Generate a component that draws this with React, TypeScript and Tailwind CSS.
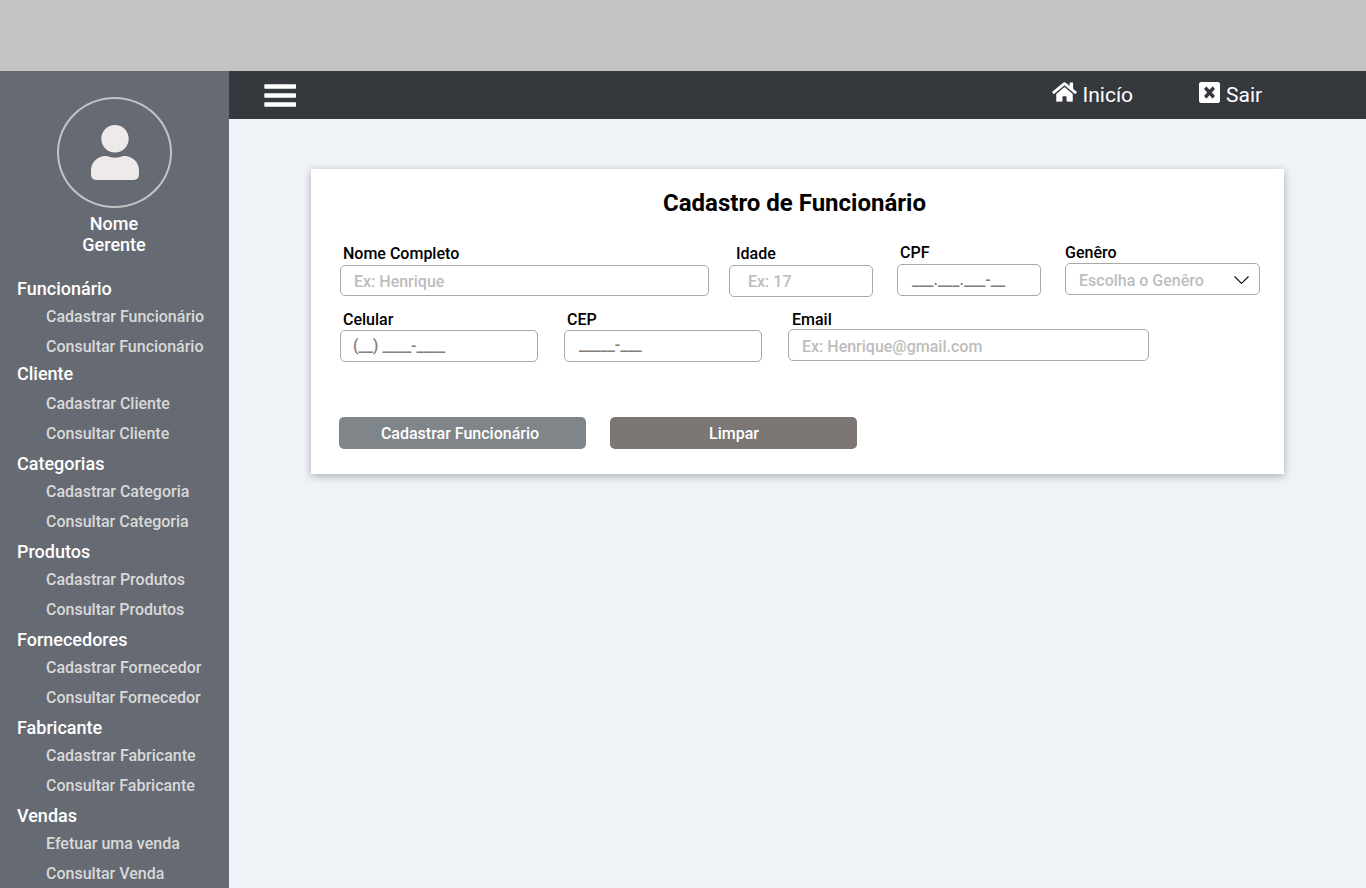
import React from 'react';
import { FaUser, FaHome } from 'react-icons/fa';

type Group = { title: string; items: string[]; className: string };

const groups: Group[] = [
  { title: 'Funcionário', items: ['Cadastrar Funcionário', 'Consultar Funcionário'], className: '' },
  { title: 'Cliente', items: ['Cadastrar Cliente', 'Consultar Cliente'], className: '-mt-px' },
  { title: 'Categorias', items: ['Cadastrar Categoria', 'Consultar Categoria'], className: 'mt-0.5' },
  { title: 'Produtos', items: ['Cadastrar Produtos', 'Consultar Produtos'], className: 'mt-0.5' },
  { title: 'Fornecedores', items: ['Cadastrar Fornecedor', 'Consultar Fornecedor'], className: 'mt-0.5' },
  { title: 'Fabricante', items: ['Cadastrar Fabricante', 'Consultar Fabricante'], className: 'mt-0.5' },
  { title: 'Vendas', items: ['Efetuar uma venda', 'Consultar Venda'], className: 'mt-0.5' },
];

type FieldProps = {
  label: string;
  hint: string;
  className: string;
  labelClass?: string;
  boxClass?: string;
  hintClass?: string;
  children?: React.ReactNode;
};

function Field({
  label,
  hint,
  className,
  labelClass = 'h-[21px] pl-[3px]',
  boxClass = 'h-8 pl-[13px] text-[#bdbdbd]',
  hintClass = '',
  children,
}: FieldProps) {
  return (
    <div className={`shrink-0 ${className}`}>
      <div className={`leading-[19px] text-black ${labelClass}`}>{label}</div>
      <div className={`flex items-center whitespace-pre rounded-[5px] border border-[#a9a7a7] bg-white ${boxClass}`}>
        <span className={hintClass}>{hint}</span>
        {children}
      </div>
    </div>
  );
}

function Sidebar() {
  return (
    <aside className="flex w-[229px] shrink-0 flex-col overflow-hidden bg-[#666b73]">
      <div className="ml-[57px] mt-[26px] flex h-[111px] w-[115px] shrink-0 items-center justify-center rounded-[50%] border-2 border-[#c4c4c4]">
        <FaUser className="h-[55px] w-12 text-[#eeeaea]" preserveAspectRatio="none" />
      </div>
      <div className="mt-[5px] h-[63px] w-[228px] shrink-0 text-center text-lg leading-[21px] text-white">
        Nome
        <br />
        Gerente
      </div>
      <nav className="shrink-0">
        {groups.map((g) => (
          <div key={g.title} className={g.className}>
            <div className={`pl-[17px] text-lg leading-[26px] text-white ${g.title === 'Cliente' ? 'mb-0.5' : ''}`}>{g.title}</div>
            {g.items.map((item) => (
              <div key={item} className="pl-[46px] text-base leading-[30px] text-[#d9d9d9]">
                {item}
              </div>
            ))}
          </div>
        ))}
      </nav>
    </aside>
  );
}

function TopBar() {
  return (
    <header className="flex h-12 shrink-0 bg-[#35383d] text-white">
      <svg className="ml-[35px] mt-[13px] h-[23px] w-8" viewBox="0 0 32 23" fill="currentColor">
        <rect x="0.3" y="0.3" width="31.7" height="4.4" rx="0.6" />
        <rect x="0.3" y="9.3" width="31.7" height="4.4" rx="0.6" />
        <rect x="0.3" y="18.3" width="31.7" height="4.4" rx="0.6" />
      </svg>
      <div className="ml-[756px] flex w-[147px]">
        <FaHome className="mt-[10px] h-[22px] w-[25px]" />
        <span className="ml-[5.5px] mt-3 text-[21px] font-normal leading-[24px]">Inicío</span>
      </div>
      <div className="flex">
        <svg className="mt-[11px] h-[21px] w-[21px]" viewBox="0 32 512 448" preserveAspectRatio="none" fill="currentColor">
          <path d="M464 32H48C21.500 32 0 53.500 0 80v352c0 26.500 21.500 48 48 48h416c26.500 0 48-21.500 48-48V80c0-26.500-21.500-48-48-48zm-83.600 290.500c4.800 4.800 4.800 12.600 0 17.400l-40.500 40.500c-4.800 4.800-12.600 4.800-17.400 0L256 313.300l-66.500 67.100c-4.800 4.800-12.600 4.800-17.400 0l-40.500-40.500c-4.800-4.800-4.800-12.600 0-17.400l67.100-66.500-67.100-66.500c-4.800-4.800-4.800-12.600 0-17.400l40.500-40.500c4.800-4.800 12.600-4.800 17.400 0l66.500 67.100 66.500-67.100c4.800-4.800 12.600-4.800 17.400 0l40.500 40.500c4.800 4.800 4.800 12.600 0 17.400L313.300 256l67.100 66.500z" />
        </svg>
        <span className="ml-1.5 mt-3 text-[21px] font-normal leading-[24px]">Sair</span>
      </div>
    </header>
  );
}

export default function App() {
  return (
    <div className="flex h-[888px] w-[1366px] flex-col overflow-hidden bg-[#eff3f8] font-['Roboto',sans-serif] font-medium">
      <div className="h-[71px] shrink-0 bg-[#c4c4c4]" />
      <div className="flex min-h-0 flex-1">
        <Sidebar />
        <div className="flex flex-1 flex-col">
          <TopBar />
          <main className="ml-[82px] mt-[50px] h-[305px] w-[973px] bg-white text-base shadow-[0_2px_8px_rgba(0,0,0,0.3)]">
            <h1 className="pt-5 pr-[6px] text-center text-2xl font-bold leading-[28px] text-black">Cadastro de Funcionário</h1>
            <div className="mt-[26px] flex h-[54px] pl-[29px]">
              <Field
                label="Nome Completo"
                hint="Ex: Henrique"
                className="mt-px w-[369px]"
                boxClass="h-[31px] pl-[13px] text-[#bdbdbd]"
                hintClass="pt-0.5"
              />
              <Field
                label="Idade"
                hint="Ex: 17"
                className="ml-5 mt-px w-36"
                labelClass="h-[21px] pl-[7px]"
                boxClass="h-8 pl-[18px] text-[#bdbdbd]"
                hintClass="pt-0.5"
              />
              <Field label="CPF" hint="___.___.___-__" className="ml-6 w-36" boxClass="h-8 pl-[14px] text-[#857c7c]" />
              <Field label="Genêro" hint="Escolha o Genêro" className="ml-6 w-[195px]" labelClass="h-5" hintClass="pt-1">
                <svg className="ml-[30px] mt-px h-2 w-[15px] text-black" viewBox="0 0 15 8" fill="none" stroke="currentColor" strokeWidth="1.1">
                  <path d="M0.500 0.500L7.500 7.300L14.500 0.500" />
                </svg>
              </Field>
            </div>
            <div className="mt-3 flex h-[53px] pl-[29px]">
              <Field
                label="Celular"
                hint="(__) ____-____"
                className="mt-px w-[198px]"
                labelClass="h-5 pl-[3px]"
                boxClass="h-8 pl-3 text-[#857c7c]"
              />
              <Field
                label="CEP"
                hint="_____-___"
                className="ml-[26px] mt-px w-[198px]"
                labelClass="h-5 pl-[3px]"
                boxClass="h-8 pl-[14px] text-[#857c7c]"
                hintClass="pb-[3px]"
              />
              <Field
                label="Email"
                hint="Ex: Henrique@gmail.com"
                className="ml-[26px] mt-px w-[361px]"
                labelClass="h-[19px] pl-1"
                hintClass="pt-1"
              />
            </div>
            <div className="mt-[55px] flex gap-6 pl-7 text-white">
              <button className="h-8 w-[247px] rounded-[5px] bg-[#808589] pr-[5px] leading-[33px]">Cadastrar Funcionário</button>
              <button className="h-8 w-[247px] rounded-[5px] bg-[#7c7674] pl-px leading-[33px]">Limpar</button>
            </div>
          </main>
        </div>
      </div>
    </div>
  );
}
